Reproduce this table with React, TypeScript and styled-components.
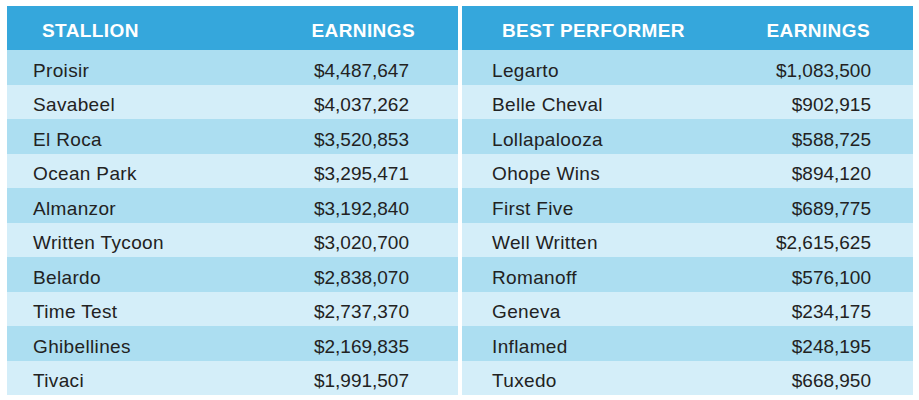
import React from "react";
import styled, { createGlobalStyle } from "styled-components";

const Global = createGlobalStyle`
  html, body { margin: 0; padding: 0; background: #ffffff; }
  body { font-family: "Liberation Sans", Arial, Helvetica, sans-serif; }
`;

const Page = styled.div`
  display: flex;
  gap: 4px;
  padding: 6px 6px 0 7px;
  width: 919px;
  box-sizing: border-box;
`;

const Table = styled.div`
  width: 451px;
  display: flex;
  flex-direction: column;
`;

const HeaderRow = styled.div<{ $left: number; $right: number }>`
  height: 44px;
  box-sizing: border-box;
  padding: 5px ${(p) => p.$right}px 0 ${(p) => p.$left}px;
  display: flex;
  align-items: center;
  justify-content: space-between;
  background: #35a7dc;
  color: #ffffff;
  font-weight: 700;
  font-size: 19px;
  letter-spacing: 0.4px;
`;

const Row = styled.div<{ $dark: boolean; $left: number; $right: number }>`
  height: 34.5px;
  box-sizing: border-box;
  padding: 7px ${(p) => p.$right}px 0 ${(p) => p.$left}px;
  display: flex;
  align-items: center;
  justify-content: space-between;
  background: ${(p) => (p.$dark ? "#acdef1" : "#d4eef9")};
  color: #222222;
  font-size: 19px;
`;

const Name = styled.span`
  letter-spacing: 0.35px;
`;

const Amount = styled.span``;

const HeadCell = styled.span``;

type Entry = [string, string];

const stallions: Entry[] = [
  ["Proisir", "$4,487,647"],
  ["Savabeel", "$4,037,262"],
  ["El Roca", "$3,520,853"],
  ["Ocean Park", "$3,295,471"],
  ["Almanzor", "$3,192,840"],
  ["Written Tycoon", "$3,020,700"],
  ["Belardo", "$2,838,070"],
  ["Time Test", "$2,737,370"],
  ["Ghibellines", "$2,169,835"],
  ["Tivaci", "$1,991,507"],
];

const performers: Entry[] = [
  ["Legarto", "$1,083,500"],
  ["Belle Cheval", "$902,915"],
  ["Lollapalooza", "$588,725"],
  ["Ohope Wins", "$894,120"],
  ["First Five", "$689,775"],
  ["Well Written", "$2,615,625"],
  ["Romanoff", "$576,100"],
  ["Geneva", "$234,175"],
  ["Inflamed", "$248,195"],
  ["Tuxedo", "$668,950"],
];

type TableProps = {
  title: string;
  rows: Entry[];
  headLeft: number;
  headRight: number;
  rowLeft: number;
  rowRight: number;
};

const EarningsTable = ({ title, rows, headLeft, headRight, rowLeft, rowRight }: TableProps) => (
  <Table>
    <HeaderRow $left={headLeft} $right={headRight}>
      <HeadCell>{title}</HeadCell>
      <HeadCell>EARNINGS</HeadCell>
    </HeaderRow>
    {rows.map(([name, amount], i) => (
      <Row key={name} $dark={i % 2 === 0} $left={rowLeft} $right={rowRight}>
        <Name>{name}</Name>
        <Amount>{amount}</Amount>
      </Row>
    ))}
  </Table>
);

export default function App() {
  return (
    <>
      <Global />
      <Page>
        <EarningsTable title="STALLION" rows={stallions} headLeft={35} headRight={43} rowLeft={26} rowRight={49} />
        <EarningsTable title="BEST PERFORMER" rows={performers} headLeft={40} headRight={43} rowLeft={30} rowRight={42} />
      </Page>
    </>
  );
}
